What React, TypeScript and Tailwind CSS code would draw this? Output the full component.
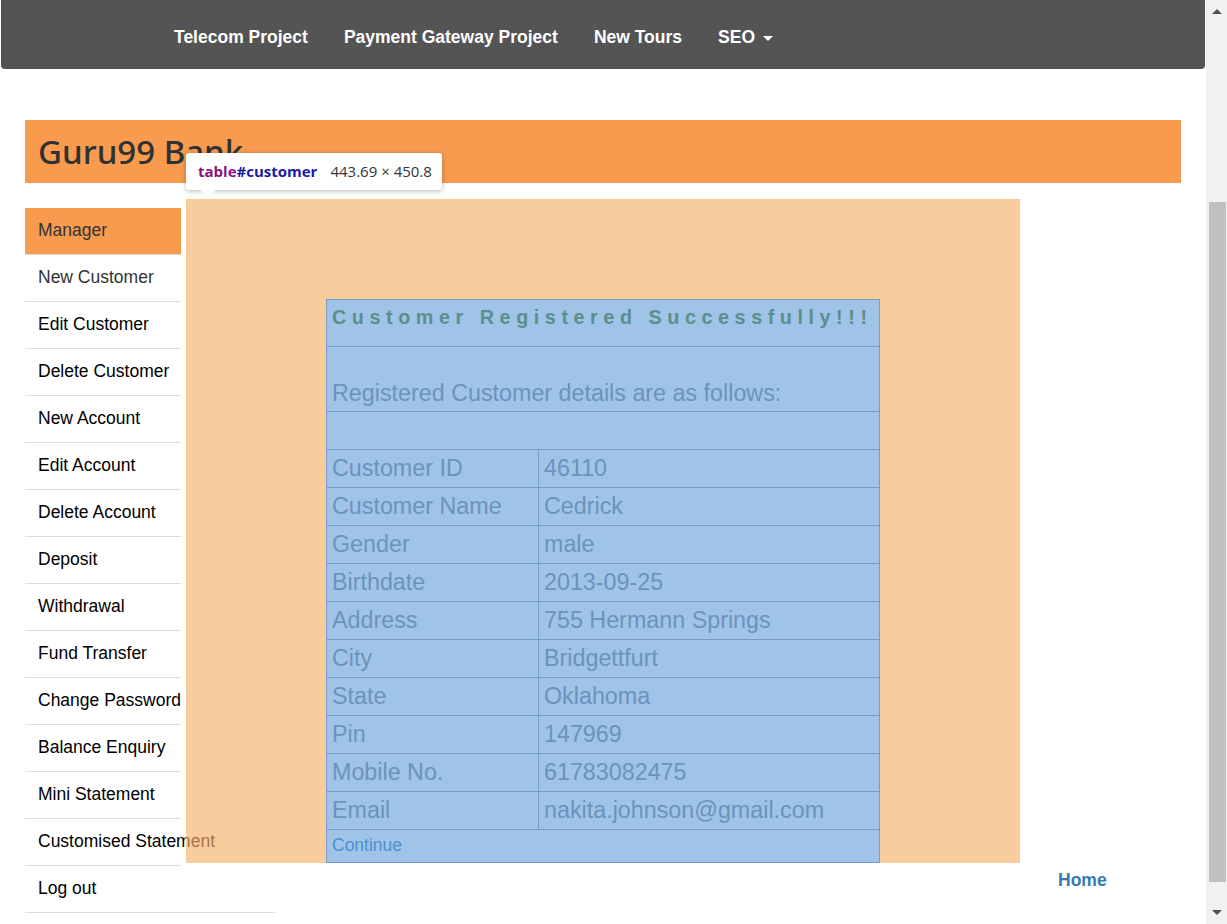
import React from "react";

const sideItems = [
  "Edit Customer",
  "Delete Customer",
  "New Account",
  "Edit Account",
  "Delete Account",
  "Deposit",
  "Withdrawal",
  "Fund Transfer",
  "Change Password",
  "Balance Enquiry",
  "Mini Statement",
  "Customised Statement",
];

const rows: [string, string][] = [
  ["Customer ID", "46110"],
  ["Customer Name", "Cedrick"],
  ["Gender", "male"],
  ["Birthdate", "2013-09-25"],
  ["Address", "755 Hermann Springs"],
  ["City", "Bridgettfurt"],
  ["State", "Oklahoma"],
  ["Pin", "147969"],
  ["Mobile No.", "61783082475"],
  ["Email", "nakita.johnson@gmail.com"],
];

export default function App() {
  return (
    <div
      className="flex w-[1227px] h-[924px] overflow-hidden bg-white"
      style={{ fontFamily: '"Liberation Sans", Arial, sans-serif' }}
    >
      <div className="relative w-[1206px] h-[924px]">
        {/* Nav */}
        <div className="ml-px w-[1204px] h-[69px] bg-[#545454] rounded-b-[4px] flex items-center pt-[6px] pl-[173px] gap-[36px] text-white font-bold text-[17.5px]">
          <span>Telecom Project</span>
          <span>Payment Gateway Project</span>
          <span>New Tours</span>
          <span className="flex items-center">
            SEO
            <span className="ml-[8px] mt-[2px] w-0 h-0 border-l-[5px] border-r-[5px] border-t-[5px] border-l-transparent border-r-transparent border-t-white" />
          </span>
        </div>

        {/* Header */}
        <div className="mt-[51px] ml-[25px] w-[1156px] h-[63px] bg-[#f89b4f] flex items-center pl-[13px]">
          <span
            className="text-[33px] font-medium text-[#2f3133]"
            style={{ fontFamily: '"Noto Sans", sans-serif' }}
          >
            Guru99 Bank
          </span>
        </div>

        {/* Body row */}
        <div className="mt-[16px] flex items-start">
          <div className="ml-[25px] w-[156px] mt-[9px] text-[17.5px]">
            <div className="h-[47px] bg-[#f89b4f] border-b border-[#dddddd] flex items-center pb-[2px] pl-[13px] text-[#333333]">
              Manager
            </div>
            <div className="h-[47px] border-b border-[#dddddd] flex items-center pb-[2px] pl-[13px] text-[#333333] whitespace-nowrap">
              New Customer
            </div>
            {sideItems.map((s) => (
              <div
                key={s}
                className="h-[47px] border-b border-[#dddddd] flex items-center pb-[2px] pl-[13px] text-black whitespace-nowrap"
              >
                {s}
              </div>
            ))}
            <div className="w-[250px] h-[47px] border-b border-[#dddddd] flex items-center pb-[2px] pl-[13px] text-black">
              Log out
            </div>
          </div>

          <div className="ml-[5px] flex flex-col">
            <div className="relative w-[834px] pl-[140px] pr-[140px] pt-[100px] bg-[rgba(246,178,107,0.66)]">
              <div className="w-[554px] border border-[#779dc4] bg-[#9fc4e7] text-[#6c93be]">
                <div className="h-[47px] border-b border-[#779dc4] pl-[5px] pt-[3px] text-[19.8px] font-bold tracking-[5.55px] text-[#5b8f8c] whitespace-nowrap">
                  Customer Registered Successfully!!!
                </div>
                <div className="h-[65px] border-b border-[#779dc4] pl-[5px] pb-[4px] flex items-end text-[23.3px] leading-[27px]">
                  Registered Customer details are as follows:
                </div>
                <div className="h-[38px] border-b border-[#779dc4]" />
                {rows.map(([k, v]) => (
                  <div key={k} className="h-[38px] border-b border-[#779dc4] flex text-[23.3px]">
                    <div className="w-[212px] border-r border-[#779dc4] pl-[5px] flex items-center">
                      {k}
                    </div>
                    <div className="pl-[5px] flex items-center">{v}</div>
                  </div>
                ))}
                <div className="h-[32px] pl-[5px] pb-[1px] flex items-center text-[17.5px] text-[#4f8fcc]">
                  Continue
                </div>
              </div>
            </div>
            <div className="pl-[872px] mt-[4px] text-[17.5px] font-bold text-[#337ab7]">Home</div>
          </div>
        </div>

        {/* Devtools tooltip */}
        <div
          className="absolute left-[186px] top-[153px] w-[256px] h-[37px] bg-white rounded-[3px] shadow-[0_1px_5px_rgba(0,0,0,0.3)] flex items-center pl-[12px] text-[15px]"
          style={{ fontFamily: '"Open Sans", sans-serif' }}
        >
          <span className="font-bold text-[#881280]">table</span>
          <span className="font-bold text-[#1a1aa6]">#customer</span>
          <span className="ml-[13px] text-[#333333]">443.69 × 450.8</span>
          <span className="absolute left-[14px] top-[37px] w-0 h-0 border-l-[8px] border-r-[8px] border-t-[8px] border-l-transparent border-r-transparent border-t-white" />
        </div>
      </div>

      {/* Scrollbar */}
      <div className="w-[21px] h-[924px] bg-[#f1f1f1] flex flex-col items-center">
        <div className="mt-[9px] w-0 h-0 border-l-[5px] border-r-[5px] border-b-[5px] border-l-transparent border-r-transparent border-b-[#505050]" />
        <div className="mt-[188px] ml-[1px] w-[17px] h-[680px] bg-[#c1c1c1]" />
        <div className="mt-[28px] w-0 h-0 border-l-[5px] border-r-[5px] border-t-[5px] border-l-transparent border-r-transparent border-t-[#505050]" />
      </div>
    </div>
  );
}
